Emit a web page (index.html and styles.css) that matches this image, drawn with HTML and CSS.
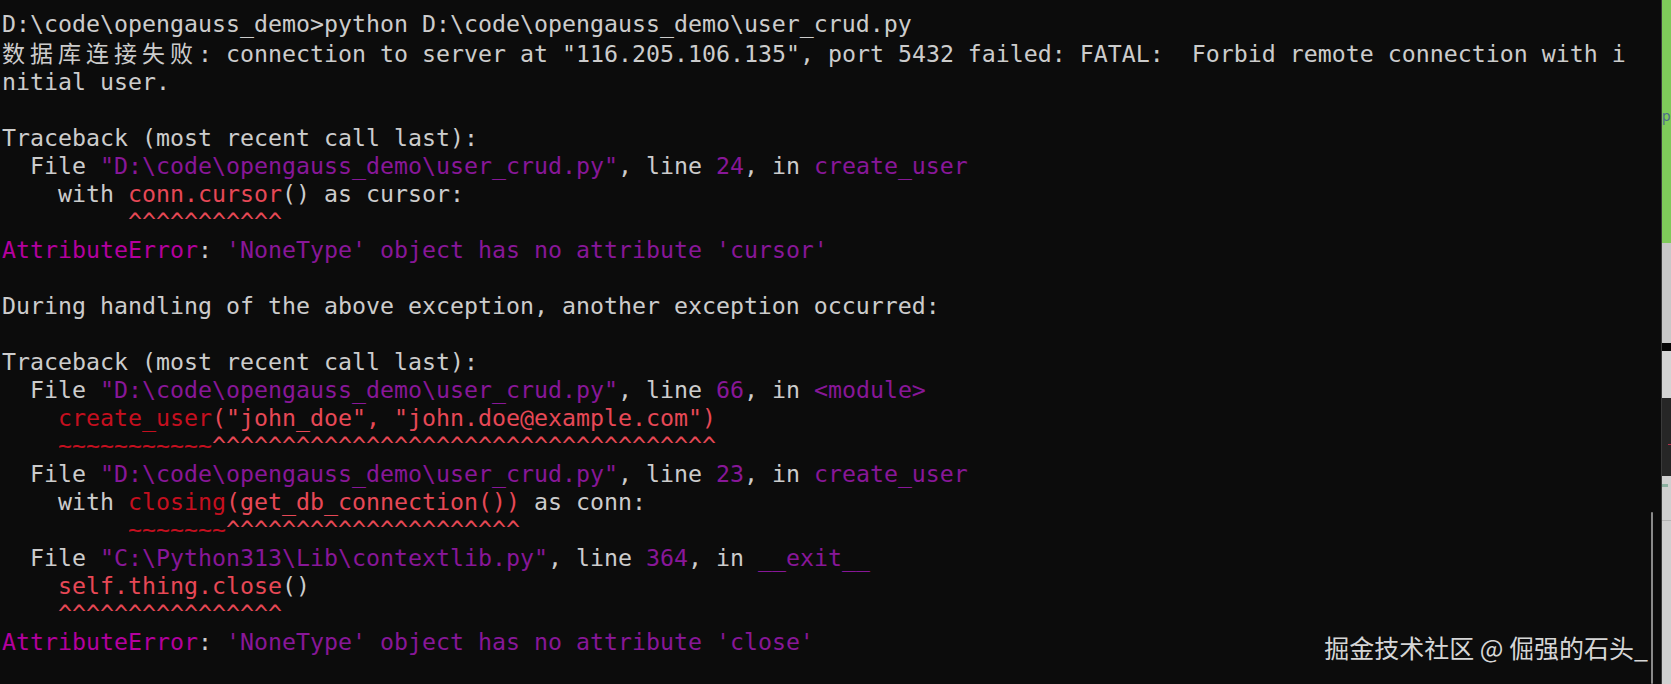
FILE: index.html
```html
<!DOCTYPE html>
<html lang="zh-CN">
<head>
<meta charset="utf-8">
<title>Terminal</title>
<link rel="stylesheet" href="styles.css">
</head>
<body>
<div class="screen">
  <main class="term">
    <div class="ln">D:\code\opengauss_demo&gt;python D:\code\opengauss_demo\user_crud.py</div>
    <div class="ln"><span class="cjk">数据库连接失败</span>: connection to server at "116.205.106.135", port 5432 failed: FATAL:  Forbid remote connection with i</div>
    <div class="ln">nitial user.</div>
    <div class="ln"></div>
    <div class="ln">Traceback (most recent call last):</div>
    <div class="ln">  File <span class="m">"D:\code\opengauss_demo\user_crud.py"</span>, line <span class="m">24</span>, in <span class="m">create_user</span></div>
    <div class="ln">    with <span class="br">conn.cursor</span>() as cursor:</div>
    <div class="ln">         <span class="br">^^^^^^^^^^^</span></div>
    <div class="ln"><span class="bm">AttributeError</span>: <span class="m">'NoneType' object has no attribute 'cursor'</span></div>
    <div class="ln"></div>
    <div class="ln">During handling of the above exception, another exception occurred:</div>
    <div class="ln"></div>
    <div class="ln">Traceback (most recent call last):</div>
    <div class="ln">  File <span class="m">"D:\code\opengauss_demo\user_crud.py"</span>, line <span class="m">66</span>, in <span class="m">&lt;module&gt;</span></div>
    <div class="ln">    <span class="r">create_user</span><span class="br">("john_doe", "john.doe@example.com")</span></div>
    <div class="ln">    <span class="r">~~~~~~~~~~~</span><span class="br">^^^^^^^^^^^^^^^^^^^^^^^^^^^^^^^^^^^^</span></div>
    <div class="ln">  File <span class="m">"D:\code\opengauss_demo\user_crud.py"</span>, line <span class="m">23</span>, in <span class="m">create_user</span></div>
    <div class="ln">    with <span class="r">closing</span><span class="br">(get_db_connection())</span> as conn:</div>
    <div class="ln">         <span class="r">~~~~~~~</span><span class="br">^^^^^^^^^^^^^^^^^^^^^</span></div>
    <div class="ln">  File <span class="m">"C:\Python313\Lib\contextlib.py"</span>, line <span class="m">364</span>, in <span class="m">__exit__</span></div>
    <div class="ln">    <span class="br">self.thing.close</span>()</div>
    <div class="ln">    <span class="br">^^^^^^^^^^^^^^^^</span></div>
    <div class="ln"><span class="bm">AttributeError</span>: <span class="m">'NoneType' object has no attribute 'close'</span></div>
    <div class="scrollbar"></div>
    <div class="watermark">掘金技术社区 @ 倔强的石头_</div>
  </main>
  <aside class="strip">
    <div class="s-green"><span class="s-letter">p</span></div>
    <div class="s-grey"></div>
    <div class="s-black"></div>
    <div class="s-light"></div>
    <div class="s-dark"><span class="s-dash"></span></div>
    <div class="s-bottom"><span class="s-dot"></span><span class="s-line"></span></div>
  </aside>
</div>
</body>
</html>
```

FILE: styles.css
```css
html, body {
  margin: 0;
  padding: 0;
  background: #0c0c0c;
}

.screen {
  display: flex;
  width: 1671px;
  height: 684px;
  overflow: hidden;
}

.term {
  position: relative;
  flex: 0 0 1661px;
  box-sizing: border-box;
  padding: 10px 0 0 2px;
  background: #0c0c0c;
  color: #cccccc;
  font-family: "DejaVu Sans Mono", "Liberation Mono", monospace;
  font-size: 23.254px;
  line-height: 28px;
}

.ln {
  white-space: pre;
  min-height: 28px;
}

.cjk {
  font-family: "Noto Sans CJK SC", sans-serif;
  font-size: 23px;
  letter-spacing: 5px;
}

.m { color: #881798; }
.bm { color: #b4009e; }
.r { color: #c50f1f; }
.br { color: #e74856; }

.scrollbar {
  position: absolute;
  left: 1651px;
  top: 512px;
  bottom: 0;
  width: 2px;
  background: #8a8a8a;
  border-radius: 1px;
}

.watermark {
  position: absolute;
  top: 635px;
  right: 13px;
  font-family: "Noto Sans CJK SC", sans-serif;
  font-size: 25px;
  line-height: 25px;
  color: #d6d6d6;
  white-space: nowrap;
}

.strip {
  flex: 0 0 10px;
  display: flex;
  flex-direction: column;
  border-left: 1px solid #3a3a3a;
  box-sizing: border-box;
  overflow: hidden;
}

.s-green {
  height: 243px;
  background: #7fcb5a;
  display: flex;
  flex-direction: column;
}

.s-letter {
  margin-top: 106px;
  margin-left: 0;
  font-family: "Noto Sans", sans-serif;
  font-size: 14px;
  line-height: 20px;
  color: #4c6b8a;
}

.s-grey {
  height: 100px;
  background: #c8c8c8;
}

.s-black {
  height: 8px;
  background: #050505;
}

.s-light {
  height: 47px;
  background: #d4d4d4;
}

.s-dark {
  height: 78px;
  background: #262626;
  display: flex;
  flex-direction: column;
}

.s-dash {
  margin-top: 46px;
  margin-left: 6px;
  width: 3px;
  height: 1px;
  background: #b0304a;
}

.s-bottom {
  flex: 1;
  background: #d0d0d0;
  display: flex;
  flex-direction: column;
}

.s-dot {
  margin-top: 8px;
  width: 6px;
  height: 3px;
  background: #8bb0a0;
}

.s-line {
  margin-top: 33px;
  height: 1px;
  background: #b4b4b4;
}
```
